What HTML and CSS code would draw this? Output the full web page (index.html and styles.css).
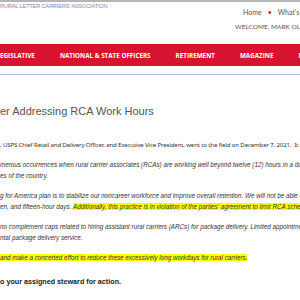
FILE: index.html
```html
<!DOCTYPE html>
<html lang="en">
<head>
  <meta charset="UTF-8" />
  <title>RCA Work Hours</title>
  <link rel="stylesheet" href="styles.css">
</head>
<body>
  <header class="site-header">
    <div class="brand">RURAL LETTER CARRIERS' ASSOCIATION</div>
    <div class="user-area">
      <div class="top-links">
        <span>Home</span>
        <span class="dot">&bull;</span>
        <span>What's New</span>
      </div>
      <div class="welcome">WELCOME, MARK OLIVER</div>
    </div>
  </header>

  <nav class="main-nav">
    <span class="first">EGISLATIVE</span>
    <span>NATIONAL &amp; STATE OFFICERS</span>
    <span>RETIREMENT</span>
    <span>MAGAZINE</span>
    <span>NATIONAL CONVENTION</span>
  </nav>

  <div class="rule"></div>

  <main class="article">
    <h1 class="title">er Addressing RCA Work Hours</h1>

    <p class="lead">, USPS Chief Retail and Delivery Officer, and Executive Vice President, went to the field on December 7, 2021.&nbsp; It states</p>

    <p class="quote">merous occurrences when rural carrier associates (RCAs) are working well beyond twelve (12) hours in a day<br>es of the country.</p>

    <p class="quote">g for America plan is to stabilize our noncareer workforce and improve overall retention. We will not be able to<br>en, and fifteen-hour days. <mark>Additionally, this practice is in violation of the parties' agreement to limit RCA schedules</mark></p>

    <p class="quote">no complement caps related to hiring assistant rural carriers (ARCs) for package delivery. Limited appointments<br>ntal package delivery service.</p>

    <p class="quote"><mark> and make a concerted effort to reduce these excessively long workdays for rural carriers.</mark></p>

    <p class="action">o your assigned steward for action.</p>
  </main>
</body>
</html>
```

FILE: styles.css
```css
* {
  box-sizing: border-box;
}

html, body {
  margin: 0;
  padding: 0;
  width: 100%;
  height: 100%;
  overflow: hidden;
  background: #ffffff;
  font-family: 'Liberation Sans', Arial, sans-serif;
}

.site-header {
  display: flex;
  height: 44px;
  border-top: 2px solid #b4b4b4;
  white-space: nowrap;
}

.brand {
  width: 235px;
  padding-top: 1px;
  font-size: 5.7px;
  letter-spacing: -0.2px;
  color: #7f8db6;
}

.user-area {
  flex: 1;
  overflow: hidden;
  font-family: 'Lato', sans-serif;
  color: #555555;
}

.top-links {
  display: flex;
  gap: 6px;
  padding: 6px 0 0 8px;
  font-size: 7px;
}

.top-links .dot {
  color: #d7142f;
}

.welcome {
  margin-top: 7px;
  font-size: 6.5px;
}

.main-nav {
  display: flex;
  gap: 25px;
  height: 22px;
  align-items: center;
  background: #d7142f;
  color: #ffffff;
  font-family: 'Open Sans', sans-serif;
  font-weight: 700;
  font-size: 6.3px;
  white-space: nowrap;
  overflow: hidden;
}

.rule {
  margin-top: 8px;
  height: 1px;
  background: #b9bcd6;
}

.article {
  white-space: nowrap;
  overflow: hidden;
}

.title {
  margin: 29px 0 0;
  font-weight: 400;
  font-size: 11px;
  line-height: 14px;
  color: #555555;
}

.lead {
  margin: 22px 0 0;
  font-family: 'Noto Sans', sans-serif;
  font-size: 6.1px;
  line-height: 10px;
  color: #333333;
  letter-spacing: -0.15px;
}

.quote {
  margin: 10px 0 0;
  font-style: italic;
  font-size: 6.3px;
  line-height: 10.5px;
  color: #333333;
}

mark {
  background: #ffff00;
  color: #333333;
}

.action {
  margin: 12px 0 0;
  font-weight: 700;
  font-size: 7.2px;
  line-height: 12px;
  color: #222222;
}
```
